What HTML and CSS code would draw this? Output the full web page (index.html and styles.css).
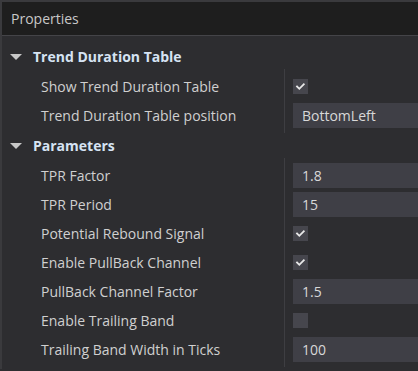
FILE: index.html
```html
<!DOCTYPE html>
<html>
<head>
<meta charset="utf-8">
<link rel="stylesheet" href="styles.css">
</head>
<body>
<div class="panel">
  <div class="title">Properties</div>
  <div class="body">
    <div class="section">
      <span class="caret"></span><span class="section-name">Trend Duration Table</span>
    </div>
    <div class="group">
      <div class="labels">
        <div class="label">Show Trend Duration Table</div>
        <div class="label">Trend Duration Table position</div>
      </div>
      <div class="values">
        <div class="cell"><span class="check on"><svg viewBox="0 0 15 15" width="15" height="15"><path d="M4 7.5 L6.3 9.8 L10.8 5.2" fill="none" stroke="#e8e8e8" stroke-width="1.8" stroke-linecap="square"/></svg></span></div>
        <div class="cell"><span class="input">BottomLeft</span></div>
      </div>
    </div>
    <div class="section">
      <span class="caret"></span><span class="section-name">Parameters</span>
    </div>
    <div class="group">
      <div class="labels">
        <div class="label">TPR Factor</div>
        <div class="label">TPR Period</div>
        <div class="label">Potential Rebound Signal</div>
        <div class="label">Enable PullBack Channel</div>
        <div class="label">PullBack Channel Factor</div>
        <div class="label">Enable Trailing Band</div>
        <div class="label">Trailing Band Width in Ticks</div>
      </div>
      <div class="values">
        <div class="cell"><span class="input">1.8</span></div>
        <div class="cell"><span class="input">15</span></div>
        <div class="cell"><span class="check on"><svg viewBox="0 0 15 15" width="15" height="15"><path d="M4 7.5 L6.3 9.8 L10.8 5.2" fill="none" stroke="#e8e8e8" stroke-width="1.8" stroke-linecap="square"/></svg></span></div>
        <div class="cell"><span class="check on"><svg viewBox="0 0 15 15" width="15" height="15"><path d="M4 7.5 L6.3 9.8 L10.8 5.2" fill="none" stroke="#e8e8e8" stroke-width="1.8" stroke-linecap="square"/></svg></span></div>
        <div class="cell"><span class="input">1.5</span></div>
        <div class="cell"><span class="check"></span></div>
        <div class="cell"><span class="input">100</span></div>
      </div>
    </div>
  </div>
</div>
</body>
</html>
```
FILE: styles.css
```css
html, body {
  margin: 0;
  padding: 0;
  background: #2d2d30;
}
body {
  font-family: "Open Sans", "Noto Sans", sans-serif;
  color: #d0d0d0;
  width: 418px;
  height: 371px;
  overflow: hidden;
}
.panel {
  border-top: 2px solid #3a3a3d;
  border-left: 2px solid #3a3a3d;
  height: 369px;
  box-sizing: border-box;
}
.title {
  height: 33px;
  background: #1e1e1e;
  border-bottom: 1px solid #444448;
  padding-left: 9px;
  font-size: 14px;
  line-height: 33px;
  color: #c8c8c8;
}
.body {
  padding-top: 8px;
}
.section {
  height: 25px;
  display: flex;
  align-items: center;
}
.caret {
  width: 0;
  height: 0;
  margin-left: 8px;
  margin-right: 11px;
  border-left: 6px solid transparent;
  border-right: 6px solid transparent;
  border-top: 6px solid #c8c8c8;
}
.section-name {
  font-weight: 700;
  font-size: 14px;
  color: #d6e3f3;
}
.group {
  display: flex;
}
.labels {
  width: 282px;
  padding: 3px 0;
}
.label {
  height: 29px;
  line-height: 29px;
  padding-left: 39px;
  font-size: 14px;
  white-space: nowrap;
}
.values {
  flex: 1;
  border-left: 1px solid #3e3e42;
  padding: 3px 0 3px 8px;
}
.cell {
  height: 29px;
  display: flex;
  align-items: center;
}
.input {
  display: block;
  width: 100%;
  height: 25px;
  line-height: 25px;
  background: #3f3f46;
  padding-left: 9px;
  font-size: 14px;
  color: #d8d8d8;
  box-sizing: border-box;
}
.check {
  display: block;
  width: 15px;
  height: 15px;
  background: #46464d;
  margin-bottom: 1px;
}
.check svg {
  display: block;
}
```
